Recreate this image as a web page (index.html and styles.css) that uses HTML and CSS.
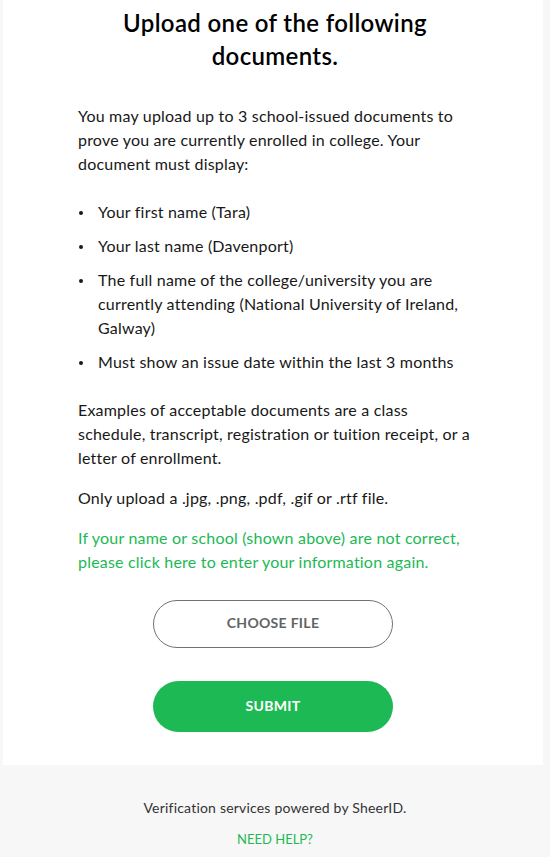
FILE: index.html
```html
<!DOCTYPE html>
<html lang="en">
<head>
<meta charset="utf-8">
<title>Upload documents</title>
<link rel="stylesheet" href="styles.css">
</head>
<body>
<main class="card">
  <h1 class="title">Upload one of the following documents.</h1>
  <div class="content">
    <p class="text">You may upload up to 3 school-issued documents to prove you are currently enrolled in college. Your document must display:</p>
    <ul class="list">
      <li class="item">Your first name (Tara)</li>
      <li class="item">Your last name (Davenport)</li>
      <li class="item">The full name of the college/university you are currently attending (National University of Ireland, Galway)</li>
      <li class="item">Must show an issue date within the last 3 months</li>
    </ul>
    <p class="text text-tight">Examples of acceptable documents are a class schedule, transcript, registration or tuition receipt, or a letter of enrollment.</p>
    <p class="text text-tight">Only upload a .jpg, .png, .pdf, .gif or .rtf file.</p>
    <p class="text text-tight link">If your name or school (shown above) are not correct, please click here to enter your information again.</p>
  </div>
  <div class="actions">
    <button class="btn btn-outline" type="button">CHOOSE FILE</button>
    <button class="btn btn-primary" type="button">SUBMIT</button>
  </div>
</main>
<footer class="footer">
  <p class="powered">Verification services powered by SheerID.</p>
  <a class="help" href="#">NEED HELP?</a>
</footer>
</body>
</html>
```

FILE: styles.css
```css
html, body {
  margin: 0;
  padding: 0;
}
body {
  background: #f7f7f7;
  font-family: "Lato", "Liberation Sans", sans-serif;
  color: #181818;
}
.card {
  background: #fff;
  margin: 0 7px 0 3px;
  padding: 6px 71px 33px 75px;
}
.title {
  margin: 0 auto;
  width: 340px;
  text-align: center;
  font-size: 24px;
  line-height: 33px;
  font-weight: 600;
  letter-spacing: 0.35px;
  color: #000;
}
.content {
  margin-top: 32px;
}
.text {
  margin: 0 0 24px;
  font-size: 16px;
  line-height: 24px;
  letter-spacing: 0.2px;
}
.text-tight {
  margin-bottom: 16px;
}
.link {
  color: #1db954;
  margin-bottom: 26px;
}
.list {
  list-style: none;
  margin: 0 0 24px;
  padding: 0;
}
.item {
  position: relative;
  padding-left: 20px;
  font-size: 16px;
  line-height: 24px;
  letter-spacing: 0.2px;
  margin-bottom: 10px;
}
.item:last-child {
  margin-bottom: 0;
}
.item::before {
  content: "";
  position: absolute;
  left: 1px;
  top: 11px;
  width: 4px;
  height: 4px;
  border-radius: 50%;
  background: #181818;
}
.actions {
  display: flex;
  flex-direction: column;
  align-items: center;
  gap: 33px;
  margin-right: 4px;
}
.btn {
  width: 240px;
  border-radius: 26px;
  padding: 0 0 3px;
  font-family: inherit;
  font-size: 14px;
  font-weight: 700;
  letter-spacing: 0.3px;
  cursor: pointer;
}
.btn-outline {
  height: 48px;
  background: #fff;
  border: 1px solid #727272;
  color: #616467;
}
.btn-primary {
  height: 51px;
  background: #1db954;
  border: none;
  color: #fff;
}
.footer {
  display: flex;
  flex-direction: column;
  align-items: center;
  padding-top: 33px;
}
.powered {
  margin: 0;
  font-size: 14px;
  line-height: 20px;
  letter-spacing: 0.2px;
  color: #333;
}
.help {
  margin-top: 11px;
  font-size: 13px;
  line-height: 20px;
  color: #1db954;
  text-decoration: none;
}
```
